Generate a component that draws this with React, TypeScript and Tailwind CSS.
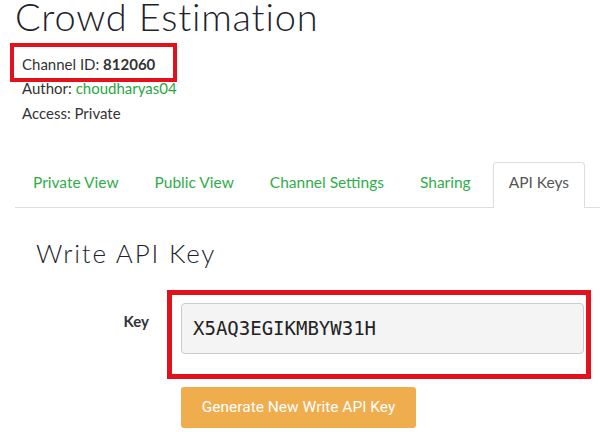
const tabs = ["Private View", "Public View", "Channel Settings", "Sharing"];

export default function App() {
  return (
    <div className="w-[600px] h-[432px] overflow-hidden bg-white font-['Lato',sans-serif] text-[#333]">
      <h1 className="ml-[15px] text-[38px] font-light leading-[32px] tracking-[0.8px] text-[#1f1f2e]">
        Crowd Estimation
      </h1>

      <div className="mt-[11px] ml-[10px] text-[15px]">
        <div className="w-fit border-[4px] border-[#e3111b] pl-[8px] pr-[18px] pt-[6px] pb-[3px] leading-[22px]">
          Channel ID: <span className="font-bold">812060</span>
        </div>
        <div className="pl-[12px] -mt-[6px] leading-[25px]">
          Author: <span className="text-[#28a745]">choudharyas04</span>
        </div>
        <div className="pl-[12px] leading-[25px]">Access: Private</div>
      </div>

      <div className="mt-[36px] ml-[15px] flex h-[46px] items-end border-b border-[#ddd] text-[15.5px] leading-[20px]">
        {tabs.map((t) => (
          <div key={t} className="h-[45px] border border-transparent px-[17px] pt-[9px] text-[#2fad4a]">
            {t}
          </div>
        ))}
        <div className="-mb-[1px] ml-[4px] h-[46px] rounded-t-[4px] border border-b-0 border-[#ddd] bg-white px-[15px] pt-[9px] text-[#555]">
          API Keys
        </div>
      </div>

      <h2 className="ml-[36px] mt-[30px] text-[26px] font-light leading-[30px] tracking-[1.8px] text-[#1f1f2e]">
        Write API Key
      </h2>

      <div className="mt-[22px] flex items-start">
        <div className="w-[150px] pt-[21px] pr-[1px] text-right text-[15px] font-bold leading-[20px] text-[#333]">
          Key
        </div>
        <div className="ml-[17px] w-[424px]">
          <div className="border-[5px] border-[#e3111b] pt-[8px] pb-[20px] pl-[9px] pr-[2px]">
            <div className="flex h-[51px] items-center rounded-[4px] border border-[#ccc] bg-[#f4f4f4] px-[11px] font-['DejaVu_Sans_Mono',monospace] text-[19px] text-[#222]">
              X5AQ3EGIKMBYW31H
            </div>
          </div>
          <button className="ml-[14px] mt-[8px] h-[41px] w-[235px] rounded-[3px] bg-[#f0ad4e] font-['Roboto',sans-serif] text-[15.5px] text-white">
            Generate New Write API Key
          </button>
        </div>
      </div>
    </div>
  );
}
